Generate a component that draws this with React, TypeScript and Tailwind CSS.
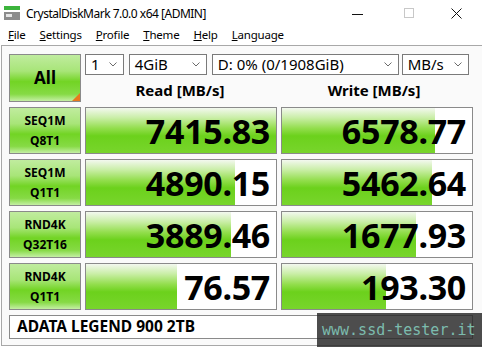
import React from "react";

const font = { fontFamily: '"Noto Sans", "Open Sans", sans-serif' };

type Row = { top: string; bottom: string; read: string; write: string; readW: number; writeW: number };

const rows: Row[] = [
  { top: "SEQ1M", bottom: "Q8T1", read: "7415.83", write: "6578.77", readW: 100, writeW: 80.5 },
  { top: "SEQ1M", bottom: "Q1T1", read: "4890.15", write: "5462.64", readW: 78.4, writeW: 79 },
  { top: "RND4K", bottom: "Q32T16", read: "3889.46", write: "1677.93", readW: 76.3, writeW: 70.5 },
  { top: "RND4K", bottom: "Q1T1", read: "76.57", write: "193.30", readW: 47.9, writeW: 54.7 },
];

function Chevron() {
  return (
    <svg width="8" height="5" viewBox="0 0 8 5" className="shrink-0">
      <polyline points="0.5,0.5 4,4 7.5,0.5" fill="none" stroke="#6b6b6b" strokeWidth="1" />
    </svg>
  );
}

function Select({ value, className }: { value: string; className: string }) {
  return (
    <div
      className={`flex h-[21px] items-center justify-between border border-[#7a7a7a] bg-white pl-[5px] pr-[6px] text-[15px] leading-none text-black ${className}`}
    >
      <span>{value}</span>
      <Chevron />
    </div>
  );
}

function LabelBox({ children }: { children: React.ReactNode }) {
  return (
    <div className="relative flex flex-col items-center justify-center border border-[#8a8a8a] bg-[linear-gradient(to_bottom,#c0ec9f_0%,#a8e578_35%,#72d424_58%,#86da45_85%,#c4efa4_100%)] font-bold text-black">
      {children}
    </div>
  );
}

function ValueBox({ value, pct }: { value: string; pct: number }) {
  return (
    <div className="relative flex items-center justify-end overflow-hidden border border-[#8a8a8a] bg-white">
      <div
        className="absolute inset-y-0 left-0 bg-[linear-gradient(to_bottom,#f3f8ef_0%,#c9eea6_22%,#93de4d_45%,#6cd11c_62%,#78d52c_100%)]"
        style={{ width: `${pct}%` }}
      />
      <span className="relative pr-[6px] text-[34px] font-bold leading-none tracking-[-0.3px] text-black">
        {value}
      </span>
    </div>
  );
}

export default function App() {
  return (
    <div className="relative h-[347px] w-[482px] overflow-hidden bg-white text-black" style={font}>
      {/* title bar */}
      <div className="flex h-[25px] items-center">
        <svg width="17" height="15" viewBox="0 0 17 15" className="ml-[4px] mt-[2px]">
          <rect x="0" y="0" width="16" height="4" fill="#3cb43c" />
          <rect x="0" y="6" width="16" height="8" fill="#8c8c8c" />
          <rect x="2" y="8" width="6" height="3" fill="#e6e6e6" />
        </svg>
        <span className="ml-[5px] mt-[3px] text-[12px] tracking-[-0.5px]">CrystalDiskMark 7.0.0 x64 [ADMIN]</span>
        <div className="ml-auto mt-[2px] flex items-center">
          <svg width="12" height="12" viewBox="0 0 12 12" className="mr-[40px]">
            <line x1="0" y1="6.5" x2="11" y2="6.5" stroke="#111" strokeWidth="1" />
          </svg>
          <svg width="12" height="12" viewBox="0 0 12 12" className="mr-[35px]">
            <rect x="0.5" y="0.5" width="9" height="9" fill="none" stroke="#c8c8c8" strokeWidth="1" />
          </svg>
          <svg width="12" height="12" viewBox="0 0 12 12" className="mr-[19px]">
            <path d="M0.5 0.5 L10.5 10.5 M10.5 0.5 L0.5 10.5" stroke="#111" strokeWidth="1" />
          </svg>
        </div>
      </div>

      {/* menu bar */}
      <div className="flex h-[20px] items-center gap-[14px] pl-[8px] text-[11.5px] tracking-[-0.2px]">
        <span><u>F</u>ile</span>
        <span><u>S</u>ettings</span>
        <span><u>P</u>rofile</span>
        <span><u>T</u>heme</span>
        <span><u>H</u>elp</span>
        <span><u>L</u>anguage</span>
      </div>

      {/* main */}
      <div className="ml-[1px] flex h-[301px] flex-col gap-[5px] border-b border-l border-t border-[#a8a8a8] bg-[#fafafa] pl-[7px] pt-[8px]">
        <div className="grid h-[48px] grid-cols-[72px_384px] gap-x-[4px]">
          <div className="relative flex items-center justify-center border border-[#8a8a8a] bg-[linear-gradient(to_bottom,#c0ec9f_0%,#a8e578_35%,#72d424_58%,#86da45_85%,#c4efa4_100%)] text-[17px] font-bold">
            All
            <div className="absolute bottom-0 right-0 h-0 w-0 border-b-[8px] border-l-[8px] border-b-[#e8781e] border-l-transparent" />
          </div>
          <div className="flex flex-col">
            <div className="flex">
              <Select value="1" className="w-[39px]" />
              <Select value="4GiB" className="ml-[5px] w-[79px]" />
              <Select value="D: 0% (0/1908GiB)" className="ml-[5px] w-[189px]" />
              <Select value="MB/s" className="ml-[3px] w-[68px]" />
            </div>
            <div className="grid flex-1 grid-cols-2 gap-x-[4px] pt-[3px] text-[15px] font-bold">
              <div className="flex items-center justify-center">Read [MB/s]</div>
              <div className="flex items-center justify-center">Write [MB/s]</div>
            </div>
          </div>
        </div>

        {rows.map((r, i) => (
          <div key={i} className="grid h-[47px] grid-cols-[72px_192px_192px] gap-x-[4px]">
            <LabelBox>
              <span className="text-[12px] leading-[20px]">{r.top}</span>
              <span className="text-[12px] leading-[20px]">{r.bottom}</span>
            </LabelBox>
            <ValueBox value={r.read} pct={r.readW} />
            <ValueBox value={r.write} pct={r.writeW} />
          </div>
        ))}

        <div className="flex h-[24px] w-[464px] items-center border border-[#8a8a8a] bg-white pl-[7px] text-[15.5px] font-bold">
          ADATA LEGEND 900 2TB
        </div>
      </div>

      {/* watermark */}
      <div className="absolute left-[317px] top-[313px] flex h-[34px] w-[165px] items-center bg-[rgba(38,38,38,0.82)] pl-[5px]">
        <span className="text-[15px] leading-none text-[#7cbcae]" style={{ fontFamily: '"DejaVu Sans Mono", monospace' }}>
          www.ssd-tester.it
        </span>
      </div>
    </div>
  );
}
